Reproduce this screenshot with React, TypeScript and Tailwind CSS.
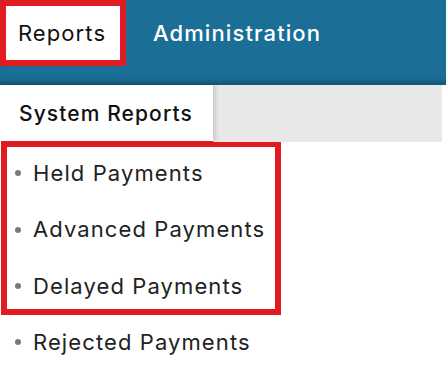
const items = ["Held Payments", "Advanced Payments", "Delayed Payments"];

function Item({ label }: { label: string }) {
  return (
    <li className="flex h-[44px] items-center">
      <span className="ml-[8px] mr-[12px] h-[6px] w-[6px] rounded-full bg-[#7a7a7a]" />
      <span>{label}</span>
    </li>
  );
}

export default function App() {
  return (
    <div className="h-[366px] w-[446px] overflow-hidden bg-white font-['Inter',sans-serif] text-[22px] tracking-[1.1px] text-[#222]">
      <nav className="flex h-[85px] items-start bg-[#1b6f97] shadow-[inset_0_-8px_8px_-6px_rgba(0,0,0,0.35)]">
        <div className="flex h-[66px] w-[126px] items-center justify-center border-[6px] border-[#e11b22] bg-white pr-[2px] text-[#111]">
          Reports
        </div>
        <div className="flex h-[66px] items-center pl-[27px] font-medium text-white">Administration</div>
      </nav>
      <div className="flex h-[57px]">
        <div className="relative z-10 flex w-[213px] items-center pl-[19px] text-[21px] font-medium text-[#111] shadow-[3px_0_4px_rgba(0,0,0,0.12)]">
          System Reports
        </div>
        <div className="mr-[4px] flex-1 bg-[#e8e8e8]" />
      </div>
      <ul className="ml-[1px] -mt-[1px] flex w-[280px] flex-col gap-[12.5px] border-[6px] border-[#e11b22] pt-[4px] pb-[1px]">
        {items.map((t) => (
          <Item key={t} label={t} />
        ))}
      </ul>
      <ul className="ml-[1px] mt-[5px] px-[6px]">
        <Item label="Rejected Payments" />
      </ul>
    </div>
  );
}
